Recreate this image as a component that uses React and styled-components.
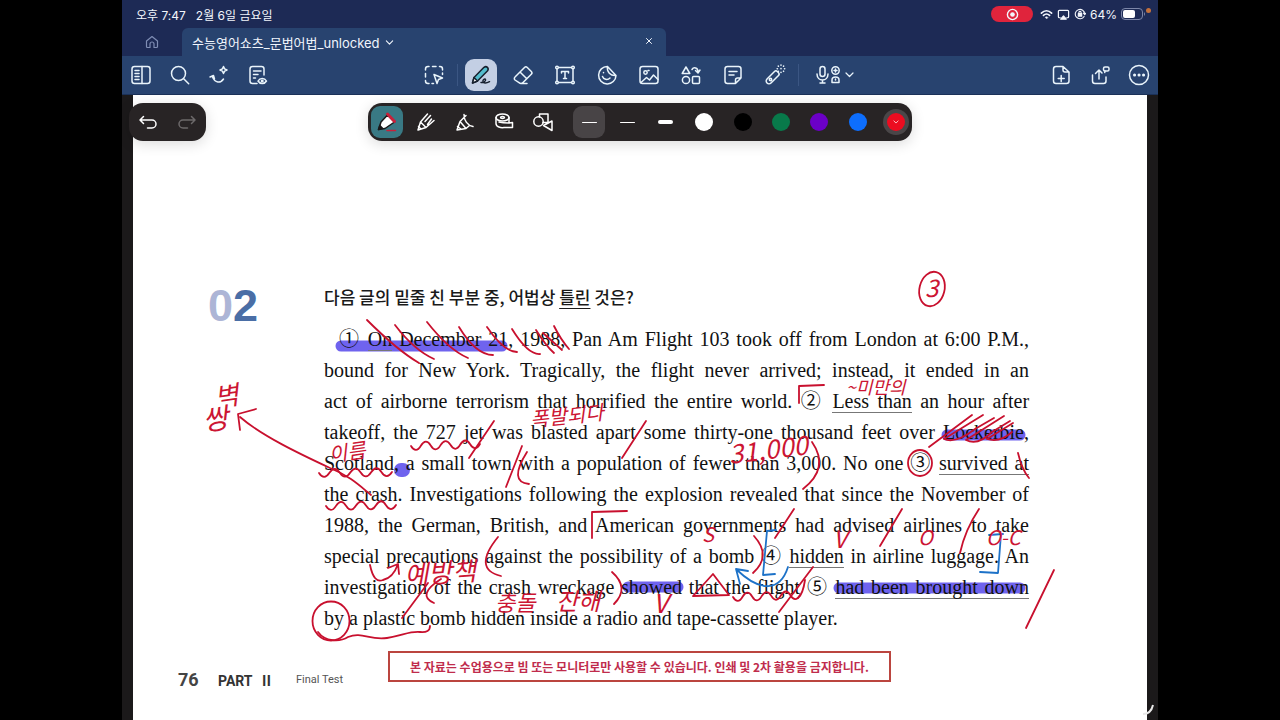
import React from 'react'
import styled, { createGlobalStyle } from 'styled-components'

const GlobalStyle = createGlobalStyle`
  * {
    box-sizing: border-box;
  }

  body {
    background: #000;
    font-family: Roboto, 'Noto Sans CJK KR', sans-serif;
    margin: 0;
  }

  button {
    background: none;
    border: 0;
    color: inherit;
    font: inherit;
    padding: 0;
  }
`

const Device = styled.div`
  background: #1b191a;
  display: flex;
  flex-direction: column;
  margin: 0 122px;
  min-height: 100vh;
  position: relative;
`

const StatusBar = styled.header`
  align-items: center;
  background: #1d2a55;
  color: #f3f6fc;
  display: flex;
  font-family: Inter, 'Noto Sans CJK KR', sans-serif;
  font-size: 12px;
  gap: 10px;
  height: 28px;
  padding: 0 12px 0 14px;
`

const StatusIcons = styled.div`
  align-items: center;
  display: flex;
  gap: 4px;
  margin-left: auto;
`

const Recording = styled.span`
  align-items: center;
  background: #e0243c;
  border-radius: 8px;
  display: flex;
  height: 16px;
  justify-content: center;
  margin-right: 3px;
  width: 42px;
`

const MicDot = styled.span`
  background: #c4713c;
  border-radius: 50%;
  height: 5px;
  position: absolute;
  right: 7px;
  top: 8px;
  width: 5px;
`

const TabBar = styled.nav`
  background: #1d2a55;
  display: flex;
  height: 28px;
`

const HomeTab = styled.button`
  align-items: center;
  color: #7f8db4;
  display: flex;
  justify-content: center;
  width: 60px;
`

const Tab = styled.div`
  align-items: center;
  background: #28436f;
  border-radius: 6px 6px 0 0;
  color: #f0f5fc;
  display: flex;
  font-family: Inter, 'Noto Sans CJK KR', sans-serif;
  font-size: 13px;
  justify-content: space-between;
  padding: 0 10px;
  width: 484px;
`

const TabTitle = styled.button`
  align-items: center;
  display: flex;
  gap: 5px;
`

const Toolbar = styled.div`
  align-items: center;
  background: #28436f;
  border-bottom: 1px solid #1b3158;
  color: #e9f4fb;
  display: grid;
  grid-template-columns: 1fr auto 1fr;
  height: 39px;
  padding: 0 3px;
`

const Group = styled.div`
  align-items: center;
  display: flex;
  gap: ${p => p.$gap || 7}px;
  justify-content: ${p => p.$align || 'flex-start'};
`

const ToolButton = styled.button`
  align-items: center;
  background: ${p => (p.$active ? '#c3cfe4' : 'none')};
  border-radius: 9px;
  display: flex;
  height: 32px;
  justify-content: center;
  width: ${p => p.$width || 32}px;
`

const Separator = styled.span`
  background: #3b5683;
  height: 22px;
  width: 1px;
`

const Workspace = styled.main`
  display: flex;
  flex: 1;
  flex-direction: column;
  padding: 0 11px;
  position: relative;
`

const Floating = styled.div`
  align-items: center;
  background: #282425;
  border-radius: 14px;
  box-shadow: 0 3px 14px rgba(0, 0, 0, 0.14);
  color: #fff;
  display: flex;
  height: 38px;
  position: absolute;
  top: 8px;
  z-index: 3;
`

const History = styled(Floating)`
  gap: 7px;
  left: 7px;
  padding: 0 3px;
`

const Palette = styled(Floating)`
  left: 50%;
  padding-left: 3px;
  transform: translateX(-50%);
  width: 544px;
`

const PaletteButton = styled.button`
  align-items: center;
  background: ${p => p.$fill || 'none'};
  border-radius: 9px;
  color: ${p => (p.$dim ? '#6c696a' : '#fff')};
  display: flex;
  height: 32px;
  justify-content: center;
  width: 32px;
`

const Presets = styled.div`
  display: flex;
  flex: 1;
  justify-content: space-between;
  margin-left: 14px;
`

const Thickness = styled.span`
  background: #fff;
  border-radius: 2px;
  height: ${p => p.$size}px;
  width: 15px;
`

const Swatch = styled.span`
  align-items: center;
  background: ${p => p.$color};
  border-radius: 50%;
  box-shadow: ${p => (p.$active ? '0 0 0 4px #4a4648' : 'none')};
  display: flex;
  height: 18px;
  justify-content: center;
  width: 18px;
`

const Sheet = styled.article`
  background: #fff;
  display: flex;
  flex: 1;
  flex-direction: column;
  padding: 188px 118px 0 45px;
  position: relative;
`

const Question = styled.section`
  display: grid;
  grid-template-columns: 116px minmax(0, 1fr);
  margin-left: 30px;
`

const Number = styled.div`
  color: #4a6ea6;
  font-family: 'Liberation Sans', sans-serif;
  font-size: 45px;
  font-weight: 700;
  line-height: 46px;

  span {
    color: #adb5d6;
  }
`

const Prompt = styled.h1`
  color: #1a1a1a;
  font-family: 'Noto Sans CJK KR', sans-serif;
  font-size: 17px;
  font-weight: 500;
  line-height: 28px;
  margin: 0 0 13px;

  u {
    text-decoration-thickness: 1px;
    text-underline-offset: 4px;
  }
`

const Passage = styled.div`
  color: #111;
  font-family: 'Liberation Serif', 'Noto Sans CJK KR', serif;
  font-size: 20px;
  line-height: 31px;
  position: relative;
`

const Line = styled.div`
  padding-left: ${p => p.$indent || 0}px;
  text-align: justify;
  text-align-last: ${p => (p.$last ? 'left' : 'justify')};
  white-space: nowrap;
`

const Under = styled.span`
  border-bottom: 1px solid #777;
`

const Circled = styled.span`
  font-family: 'Noto Sans CJK KR', sans-serif;
  font-size: 20px;
  line-height: 20px;
`

const Footer = styled.footer`
  align-items: center;
  color: #333;
  display: flex;
  margin-top: 9px;
`

const PageNumber = styled.span`
  color: #444;
  font-size: 18px;
  font-weight: 700;
  padding-top: 26px;
  width: 40px;
`

const Part = styled.span`
  font-family: Roboto, 'Noto Sans CJK KR', sans-serif;
  font-size: 14px;
  font-weight: 700;
  padding-top: 26px;
  width: 78px;
`

const Chapter = styled.span`
  color: #555;
  font-size: 11px;
  padding-top: 26px;
  width: 92px;
`

const Notice = styled.p`
  border: 2px solid #bb453f;
  color: #c02c4c;
  font-family: 'Noto Sans CJK KR', sans-serif;
  font-size: 12px;
  font-weight: 700;
  line-height: 27px;
  margin: 0;
  padding: 0 20px;
  white-space: nowrap;
`

const Layer = styled.svg`
  height: auto;
  left: 0;
  pointer-events: none;
  position: absolute;
  top: 0;
  width: 100%;
`

const Note = styled.text`
  fill: #cc1533;
  font-family: 'Noto Sans CJK KR', sans-serif;
  font-size: ${p => p.$size || 20}px;
  font-style: italic;
  font-weight: 400;
`

const Corner = styled.svg`
  bottom: 3px;
  position: absolute;
  right: 2px;
  z-index: 4;
`

const Icon = ({ children, size = 24, box = 24, width = 1.5 }) => (
  <svg
    width={size}
    height={size}
    viewBox={`0 0 ${box} ${box}`}
    fill='none'
    stroke='currentColor'
    strokeWidth={width}
    strokeLinecap='round'
    strokeLinejoin='round'
    aria-hidden='true'
  >
    {children}
  </svg>
)

const Chevron = ({ size = 9 }) => (
  <Icon size={size} box={10} width={1.2}>
    <path d='M1.5 3.2 5 6.8l3.5-3.6' />
  </Icon>
)

const icons = {
  sidebar: (
    <>
      <rect x='3' y='3.5' width='18' height='17' rx='2.5' />
      <path d='M13 3.5v17M6 7.5h4M6 10.5h4M6 13.5h4M6 16.5h4' />
    </>
  ),
  search: (
    <>
      <circle cx='10.5' cy='10.5' r='7' />
      <path d='m15.7 15.7 5 5' />
    </>
  ),
  magic: (
    <>
      <path d='M3 14 6.500 12.500l1 3.500M5.500 14c2.500 6 8 6.500 11 2' />
      <path d='m16.500 3.500 1.100 2.400L20 7l-2.400 1.100-1.100 2.400-1.100-2.400L13 7l2.400-1.100z' />
    </>
  ),
  review: (
    <>
      <path d='M11 20.5H6.500A2.500 2.500 0 0 1 4 18V6a2.500 2.500 0 0 1 2.500-2.500h9A2.500 2.500 0 0 1 18 6v6M7.500 8H15M7.500 11.500h4.500M7.500 15h2' />
      <path d='M12 18c2-3.500 6.500-3.500 8.500 0-2 3.300-6.500 3.300-8.500 0z' />
      <circle cx='16.2' cy='18' r='.8' />
    </>
  ),
  select: (
    <>
      <path d='M3.500 7V6A2.500 2.500 0 0 1 6 3.500h1M10.500 3.500h3.500M17.500 3.500h.5A2.500 2.500 0 0 1 20.500 6v1M3.500 10.500V14M3.500 17.500v.5A2.500 2.500 0 0 0 6 20.500h1M20.500 10v1.500M10 20.500h1.500' />
      <path d='m12 11.500 8.500 3.500-4 1.500-1.500 4z' />
    </>
  ),
  pen: (
    <>
      <path
        d='M5 14.500 15 4.300c2.600-1.800 5.300.8 3.600 3.500L8.500 18 3.500 20z'
        fill='#53bccd'
        stroke='#16202e'
      />
      <path d='m3.500 20 1.500-5.500L8.500 18z' fill='#f5f5f5' stroke='#16202e' />
      <path
        d='M12 19.500c2.500.5 5-1.500 4.500-3-.5-1.200-3 0-2.500 2 .5 1.800 3 2 6.500.2'
        stroke='#16202e'
      />
    </>
  ),
  eraser: (
    <path d='m4 14 9.500-9.500a2 2 0 0 1 2.800 0l4 4a2 2 0 0 1 0 2.800L12 19.500a3 3 0 0 1-4 .2L4 17a2 2 0 0 1 0-3zM9 9l6.800 6.800M11 20.500h5' />
  ),
  text: (
    <>
      <rect x='4' y='4.5' width='16' height='15' />
      <path d='M8.500 10V8.500h7V10M12 8.500v7M10.500 15.500h3' />
      <circle cx='4' cy='4.5' r='1.3' fill='#28436f' />
      <circle cx='20' cy='4.5' r='1.3' fill='#28436f' />
      <circle cx='4' cy='19.5' r='1.3' fill='#28436f' />
      <circle cx='20' cy='19.5' r='1.3' fill='#28436f' />
    </>
  ),
  sticker: (
    <>
      <path d='M12.500 3.500a8.700 8.700 0 1 0 8.500 9zM12.500 3.500c-1 5.500 3 9.500 8.500 9' />
      <path d='M7.500 13.500c1 3 5 4 7.500 1.500M8.500 9.500v.3' />
    </>
  ),
  image: (
    <>
      <rect x='3' y='3.5' width='18' height='17' rx='2.5' />
      <circle cx='8.5' cy='9.5' r='1.7' />
      <path d='m4 19.500 5.500-5 3 2.500 4-5 4.500 4.500M11 7.500h1' />
    </>
  ),
  shapes: (
    <>
      <path d='M7 4 3.200 10.500h7.600zM13 6.500c1.500-2.500 6-2.500 6 2.500M16.500 7.500 19 10l2-3' />
      <circle cx='7' cy='17' r='3.6' />
      <rect x='13.5' y='13.5' width='7' height='7' rx='1' />
    </>
  ),
  note: (
    <path d='M14.500 20.500H6.500A2.500 2.500 0 0 1 4 18V6a2.500 2.500 0 0 1 2.500-2.500h11A2.500 2.500 0 0 1 20 6v9zM14.500 20.500V17a2 2 0 0 1 2-2H20M8 8.500h8M8 12h5' />
  ),
  laser: (
    <>
      <path d='m4 16 7.500-7.500a2 2 0 0 1 2.800 0l1.200 1.200a2 2 0 0 1 0 2.800L8 20a2.800 2.800 0 0 1-4-4z' />
      <circle cx='7.5' cy='16.5' r='1.2' />
      <path
        d='M18 2v.2M18 9.200v.2M14.200 5.700h.2M21.500 5.700h.2M15.300 3.100l.1.100M20.500 8.200l.1.100M20.600 3.100l-.1.100M18 5.600v.2M15.300 8.400l.1-.1'
        strokeWidth='1.6'
      />
    </>
  ),
  addPage: (
    <path d='M14 3.500H7A2.500 2.500 0 0 0 4.500 6v12A2.500 2.500 0 0 0 7 20.500h10.500A2.500 2.500 0 0 0 20 18V9zM14 3.500V7a2 2 0 0 0 2 2h4M12.200 12.500v6M9.200 15.500h6' />
  ),
  share: (
    <>
      <path d='M4.500 12v6A2.500 2.500 0 0 0 7 20.500h8.500A2.500 2.500 0 0 0 18 18v-4M11 16V7.500M7.500 10.500 11 7l3 3' />
      <rect x='15.5' y='4' width='5.5' height='4' rx='1.5' />
      <path d='m17 8-.3 1.500' />
    </>
  ),
  more: (
    <>
      <circle cx='12' cy='12' r='9.5' />
      <path d='M7.500 12h.1M12 12h.1M16.500 12h.1' strokeWidth='3' />
    </>
  ),
  undo: <path d='M7.500 6.500 4 10l3.500 3.500M4.500 10H16a4 4 0 0 1 0 8h-4.500' />,
  redo: <path d='M16.500 6.500 20 10l-3.500 3.500M19.500 10H8a4 4 0 0 0 0 8h4.500' />,
  fountain: (
    <>
      <path
        d='m3.500 19.500 2.500-7.500L12.500 5l7 7-9.500 6.500z'
        fill='#fff'
        stroke='#1a1718'
      />
      <path d='m12.500 4 7 7.500' stroke='#c9203a' strokeWidth='3' />
      <path d='m3.500 19.500 1.300-4 2.700 2.800z' stroke='#1a1718' fill='#1a1718' />
      <path d='M12 20.500h8.500' stroke='#c9203a' />
    </>
  ),
  ball: (
    <path d='m4 20 2.500-8L13.500 4M4 20l8-2.500 8-7M6.500 12l5.500 5.500M11 11.500l5.500-6M13.500 14.500 17.500 9M4.500 16.500 7 19' />
  ),
  brush: (
    <path d='m4 20 3-8.500L13 5.500M4 20l9-1.500M11 4.500c0 6 3.500 11 9 12M7 11.500 13 18.500l3.500-3M4.500 16.500 8 19' />
  ),
  tape: (
    <>
      <ellipse cx='10.5' cy='7.5' rx='6.5' ry='3.5' />
      <ellipse cx='10.5' cy='7.5' rx='2' ry='1' />
      <path d='M4 7.500v6c0 3.500 5 4.500 8 4h8.500v-5L17 13c-4 0-6.500 0-10-1M17 7.500V13' />
    </>
  ),
  geometry: (
    <>
      <circle cx='7.5' cy='11.5' r='4.7' />
      <path d='M8.500 7V4h8.500v8.500H12M12.500 15.500 21 11v9.500z' />
    </>
  )
}

const Tool = ({ name, label, active, children, width }) => (
  <ToolButton aria-label={label} $active={active} $width={width}>
    {children || <Icon>{icons[name]}</Icon>}
  </ToolButton>
)

// a hand drawn squiggle between two points
const wave = (x1, y1, x2, y2, count) => {
  const dx = (x2 - x1) / count
  const dy = (y2 - y1) / count
  let d = `M${x1} ${y1}`
  for (let i = 0; i < count; i++) {
    d += `q${dx / 2} ${i % 2 ? -8 : 8} ${dx} ${dy}`
  }
  return d
}

const marking = [
  { d: 'M341 346H502', width: 11 },
  { d: 'M947 435H1020', width: 11 },
  { d: 'M628 587H678', width: 11 },
  { d: 'M839 588H1020', width: 11 },
  { d: 'M401 470H403', width: 14 }
]

const redInk = [
  // arrow towards the margin note
  'M240 417C262 436 300 454 330 468C350 476 360 486 371 495',
  'M256 409 238 414 240 430',
  // crossed out phrase
  'M367 320Q397 350 419 363',
  'M395 325Q414 350 434 359',
  'M427 322Q449 350 468 358',
  'M459 327Q476 355 493 355',
  'M487 327Q504 352 517 352',
  'M512 329Q528 355 540 354',
  'M536 330Q546 346 554 353',
  'M543 333 562 350',
  'M554 326Q561 340 569 349',
  // wavy underlines
  wave(411, 446, 480, 444, 7),
  wave(319, 473, 392, 472, 7),
  wave(326, 506, 396, 505, 7),
  wave(733, 597, 800, 595, 7),
  'M798 598Q803 594 805 580',
  // phrase breaks
  'M494 421 469 458',
  'M646 421 622 458',
  'M522 446 506 487',
  'M794 509 775 538',
  'M902 509 880 546',
  'M979 509Q965 530 960 553',
  'M1054 570 1026 628',
  'M813 567 779 612',
  'M1018 453Q1022 470 1029 478',
  // brackets
  'M527 452Q508 482 529 484',
  'M812 442Q830 468 803 489',
  'M498 537Q472 569 501 576',
  'M612 572Q630 588 614 604',
  'M754 536Q772 556 753 573',
  'M627 511 592 512 592 538',
  'M824 385 799 386 799 403',
  // scribble over the place name
  'M929 447 972 415',
  'M983 415 944 439Q956 444 975 429L994 418',
  'M1004 416 966 440Q978 446 992 432L1010 421',
  'M1013 423 987 439Q1000 443 1012 432',
  'M713 574 693 596 729 595Z',
  'M370 565Q374 584 383 580Q393 578 398 564M388 568 398 564 399 574',
  'M428 583 402 618',
  'M441 579Q416 595 434 603',
  'M318 632C325 642 340 642 348 637C362 631 370 641 387 638S410 631 420 632Q430 633 430 626'
]

const blueInk = [
  'M776 530 767 531 763 575 775 574',
  'M788 567C780 592 760 592 737 570M748 571 736 569 740 584',
  'M989 535 1003 534M1001 534 998 573 980 572'
]

const notes = [
  { x: 925, y: 297, size: 24, text: '3' },
  { x: 216, y: 407, size: 26, angle: -8, text: '벽' },
  { x: 204, y: 431, size: 28, angle: -8, text: '쌍' },
  { x: 330, y: 462, size: 20, angle: -8, text: '이름' },
  { x: 531, y: 427, size: 20, angle: -6, text: '폭발되다' },
  { x: 846, y: 394, size: 18, text: '~미만의' },
  { x: 730, y: 464, size: 26, angle: -7, text: '31,000' },
  { x: 702, y: 542, size: 20, text: 'S' },
  { x: 833, y: 548, size: 24, text: 'V' },
  { x: 918, y: 545, size: 20, text: 'O' },
  { x: 986, y: 545, size: 20, text: 'O-C' },
  { x: 405, y: 585, size: 26, angle: -4, text: '예방책' },
  { x: 495, y: 611, size: 22, text: '충돌' },
  { x: 556, y: 610, size: 24, text: '잔해' },
  { x: 653, y: 613, size: 26, text: 'V' }
]

// both layers share the coordinates of the whole screen
const pageBox = '133 95 1014 625'

const Highlights = () => (
  <Layer viewBox={pageBox}>
    {marking.map(({ d, width }) => (
      <path key={d} d={d} stroke='#6f63ee' strokeWidth={width} strokeLinecap='round' />
    ))}
  </Layer>
)

const Ink = () => (
  <Layer
    viewBox={pageBox}
    fill='none'
    strokeWidth='1.8'
    strokeLinecap='round'
    strokeLinejoin='round'
  >
    <g stroke='#c8102e'>
      {redInk.map(d => (
        <path key={d} d={d} />
      ))}
      <ellipse cx='932' cy='289' rx='12.5' ry='17.5' transform='rotate(14 932 289)' />
      <ellipse cx='920' cy='463' rx='12' ry='13' />
      <ellipse cx='331' cy='621' rx='18.5' ry='19.5' />
    </g>
    <g stroke='#1d72c8'>
      {blueInk.map(d => (
        <path key={d} d={d} />
      ))}
    </g>
    {notes.map(({ x, y, size, angle = 0, text }) => (
      <Note
        key={`${x}-${y}`}
        x={x}
        y={y}
        $size={size}
        transform={`rotate(${angle} ${x} ${y})`}
      >
        {text}
      </Note>
    ))}
  </Layer>
)

const Status = () => (
  <StatusBar>
    <span>오후 7:47</span>
    <span>2월 6일 금요일</span>
    <StatusIcons>
      <Recording>
        <Icon size={13} box={14}>
          <circle cx='7' cy='7' r='5.5' />
          <circle cx='7' cy='7' r='2.5' fill='currentColor' stroke='none' />
        </Icon>
      </Recording>
      <Icon size={13} box={14} width={1.8}>
        <path d='M1.500 5.500c3.300-3.300 7.700-3.300 11 0M3.700 8c2-2 4.600-2 6.600 0' />
        <path d='M7 11.500 5.500 10q1.500-1.400 3 0z' fill='currentColor' strokeWidth='.5' />
      </Icon>
      <Icon size={13} box={14} width={1.3}>
        <path d='M3.500 10.500H2.500a1 1 0 0 1-1-1v-6a1 1 0 0 1 1-1h9a1 1 0 0 1 1 1v6a1 1 0 0 1-1 1h-1' />
        <path d='m7 8.500 3 3.500H4z' fill='currentColor' />
      </Icon>
      <Icon size={12} box={14} width={1.3}>
        <path d='M11.800 9.800A5.500 5.500 0 1 1 12.500 7M11 6l1.500 1.700L14 6' />
        <rect x='5' y='6.5' width='4' height='3' fill='currentColor' />
        <path d='M5.700 6.500V5.300a1.300 1.300 0 0 1 2.600 0v1.200' />
      </Icon>
      <span>64%</span>
      <svg width='25' height='12' viewBox='0 0 25 12' aria-hidden='true'>
        <rect x='.5' y='.5' width='21' height='11' rx='3.5' fill='none' stroke='#7c86a8' />
        <rect x='2' y='2' width='12' height='8' rx='2' fill='#fff' />
        <path d='M23 4q2 2 0 4z' fill='#7c86a8' />
      </svg>
    </StatusIcons>
    <MicDot />
  </StatusBar>
)

const Tabs = () => (
  <TabBar>
    <HomeTab aria-label='홈'>
      <Icon size={14} box={14} width={1.2}>
        <path d='M1.500 6 7 1.500 12.500 6v5.500a1 1 0 0 1-1 1H9V9a2 2 0 0 0-4 0v3.500H2.500a1 1 0 0 1-1-1z' />
      </Icon>
    </HomeTab>
    <Tab>
      <TabTitle>
        수능영어쇼츠_문법어법_unlocked <Chevron />
      </TabTitle>
      <button aria-label='탭 닫기'>
        <Icon size={14} box={14} width={1}>
          <path d='m4.500 4.500 5 5M9.500 4.500l-5 5' />
        </Icon>
      </button>
    </Tab>
  </TabBar>
)

const MainToolbar = () => (
  <Toolbar>
    <Group>
      <Tool name='sidebar' label='사이드바' />
      <Tool name='search' label='검색' />
      <Tool name='magic' label='자동 변환' />
      <Tool name='review' label='검토' />
    </Group>
    <Group>
      <Tool name='select' label='선택' />
      <Separator />
      <Group $gap={10}>
        <Tool name='pen' label='펜' active />
        <Tool name='eraser' label='지우개' />
        <Tool name='text' label='텍스트' />
        <Tool name='sticker' label='스티커' />
        <Tool name='image' label='이미지' />
        <Tool name='shapes' label='요소' />
        <Tool name='note' label='메모' />
        <Tool name='laser' label='레이저' />
      </Group>
      <Separator />
      <Tool label='녹음' width={56}>
        <svg
          width='40'
          height='24'
          viewBox='0 0 40 24'
          fill='none'
          stroke='currentColor'
          strokeWidth='1.5'
          strokeLinecap='round'
          strokeLinejoin='round'
          aria-hidden='true'
        >
          <rect x='6' y='3.5' width='5' height='10' rx='2.5' />
          <path d='M3 11c0 8 11 8 11 0M8.500 17v3M6 20h5' />
          <circle cx='21.5' cy='7.500' r='3.7' />
          <path d='M21.500 6v3M20 7.500h3M18 19.500V17c0-4 7-4 7 0v2.500zM21.500 16v1' />
          <path d='m32 10 3.500 3.500L39 10' strokeWidth='1.2' />
        </svg>
      </Tool>
    </Group>
    <Group $align='flex-end'>
      <Tool name='addPage' label='페이지 추가' />
      <Tool name='share' label='공유' />
      <Tool name='more' label='더 보기' />
    </Group>
  </Toolbar>
)

const tools = [
  ['fountain', '만년필'],
  ['ball', '볼펜'],
  ['brush', '브러시'],
  ['tape', '테이프'],
  ['geometry', '도형']
]

const colors = ['#fff', '#000', '#08794a', '#6b00c7', '#0d6efd', '#ec0c20']

const PenPalette = () => (
  <Palette>
    <Group>
      {tools.map(([name, label], i) => (
        <PaletteButton key={name} aria-label={label} $fill={i === 0 && '#397984'}>
          <Icon>{icons[name]}</Icon>
        </PaletteButton>
      ))}
    </Group>
    <Presets>
      {[1, 2, 4].map(size => (
        <PaletteButton
          key={size}
          aria-label={`굵기 ${size}`}
          $fill={size === 1 && '#484446'}
        >
          <Thickness $size={size === 2 ? 1 : size} />
        </PaletteButton>
      ))}
      {colors.map((color, i) => (
        <PaletteButton key={color} aria-label={`색상 ${i + 1}`}>
          <Swatch $color={color} $active={i === 5}>
            {i === 5 && <Chevron size={6} />}
          </Swatch>
        </PaletteButton>
      ))}
    </Presets>
  </Palette>
)

const App = () => (
  <>
    <GlobalStyle />
    <Device>
      <Status />
      <Tabs />
      <MainToolbar />
      <Workspace>
        <History>
          <PaletteButton aria-label='실행 취소'>
            <Icon>{icons.undo}</Icon>
          </PaletteButton>
          <PaletteButton aria-label='다시 실행' $dim>
            <Icon>{icons.redo}</Icon>
          </PaletteButton>
        </History>
        <PenPalette />
        <Sheet>
          <Highlights />
          <Question>
            <Number>
              <span>0</span>2
            </Number>
            <div>
              <Prompt>
                다음 글의 밑줄 친 부분 중, 어법상 <u>틀린</u> 것은?
              </Prompt>
              <Passage>
                <Line $indent={15}>
                  <Circled>①</Circled> <Under>On</Under> December 21, 1988, Pan Am
                  Flight 103 took off from London at 6:00 P.M.,
                </Line>
                <Line>
                  bound for New York. Tragically, the flight never arrived; instead,
                  it ended in an
                </Line>
                <Line>
                  act of airborne terrorism that horrified the entire world.{' '}
                  <Circled>②</Circled> <Under>Less than</Under> an hour after
                </Line>
                <Line>
                  takeoff, the 727 jet was blasted apart some thirty-one thousand
                  feet over Lockerbie,
                </Line>
                <Line>
                  Scotland, a small town with a population of fewer than 3,000. No
                  one <Circled>③</Circled> <Under>survived at</Under>
                </Line>
                <Line>
                  the crash. Investigations following the explosion revealed that
                  since the November of
                </Line>
                <Line>
                  1988, the German, British, and American governments had advised
                  airlines to take
                </Line>
                <Line>
                  special precautions against the possibility of a bomb{' '}
                  <Circled>④</Circled> <Under>hidden</Under> in airline luggage. An
                </Line>
                <Line>
                  investigation of the crash wreckage showed that the flight{' '}
                  <Circled>⑤</Circled> <Under>had been brought down</Under>
                </Line>
                <Line $last>
                  by a plastic bomb hidden inside a radio and tape-cassette player.
                </Line>
              </Passage>
            </div>
          </Question>
          <Footer>
            <PageNumber>76</PageNumber>
            <Part>PART&nbsp; Ⅱ</Part>
            <Chapter>Final Test</Chapter>
            <Notice>
              본 자료는 수업용으로 빔 또는 모니터로만 사용할 수 있습니다. 인쇄 및 2차
              활용을 금지합니다.
            </Notice>
          </Footer>
          <Ink />
        </Sheet>
      </Workspace>
      <Corner width='16' height='16' viewBox='0 0 16 16' aria-hidden='true'>
        <path d='M3 13q8 0 10-9' fill='none' stroke='#e8e8e8' strokeWidth='2' />
      </Corner>
    </Device>
  </>
)

export default App
